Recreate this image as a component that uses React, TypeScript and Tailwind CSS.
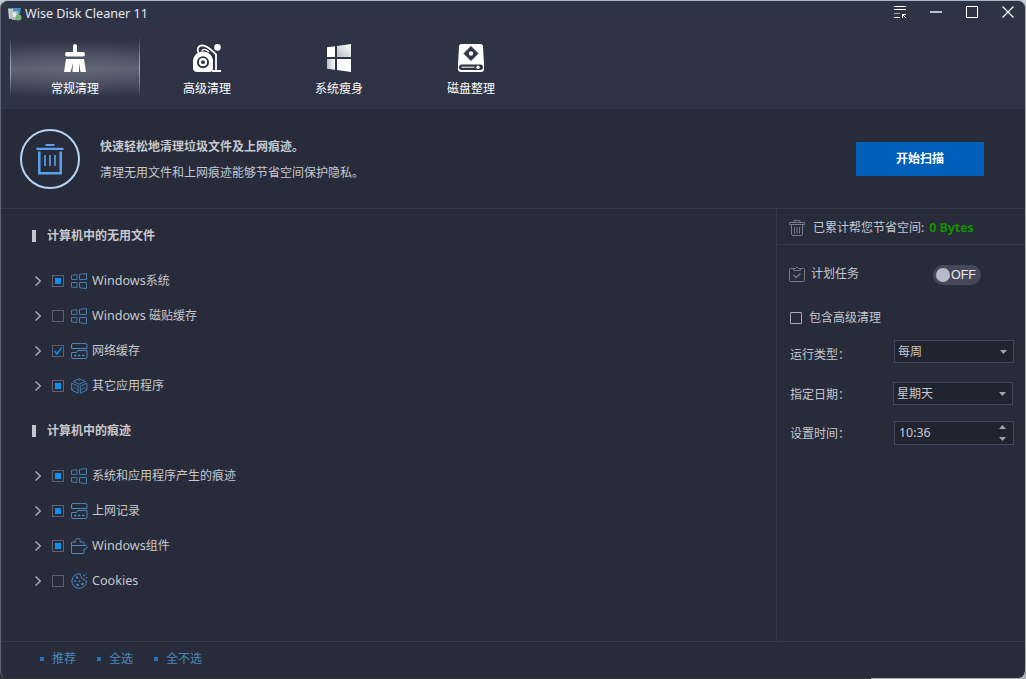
import type { ReactNode } from "react";
import clsx from "clsx";

type CheckState = "partial" | "checked" | "empty";

/* Latin text runs slightly larger than the 12px Chinese text */
function Latin({ children }: { children: ReactNode }) {
  return <span className="text-[12.6px]">{children}</span>;
}

function WindowsOutline() {
  return (
    <svg width="17" height="16" viewBox="0 0 17 16" fill="none" stroke="#437fad">
      <path d="M.5 2.300 6 1.600v4.900H.5zM8.500 1.400l7-.9v6h-7zM.5 9.500H6v5.200l-5.500-.8zM8.500 9.500h7v6.200l-7-1z" />
    </svg>
  );
}

function NetworkIcon() {
  return (
    <svg width="17" height="16" viewBox="0 0 17 16" fill="none" stroke="#4a8abb">
      <path d="M.5 5.500V2Q.5.500 2 .500h12.500Q16 .500 16 2v3.500zM16 7.500V14q0 1.500-1.500 1.500H2Q.5 15.500.5 14V9.500h5l1.500-2z" />
      <path d="M3 12.500h2.500M7 12.500h2.500M11 12.500h2.500" strokeWidth="1.600" />
    </svg>
  );
}

function CubeIcon() {
  return (
    <svg width="17" height="16" viewBox="0 0 17 16" fill="none" stroke="#437fad" strokeLinejoin="round">
      <path d="M8.200.6 14.500 3.500 8.200 6.200 2 3.500zM.6 5.200 7.200 8v7.300L.6 12zM15.900 5.200 9.300 8v7.300l6.600-3.300z" />
      <path d="M.8 12 4 9.500l3 3M15.700 12l-3.200-2.500-3 3M8.200.800v2.400" opacity=".8" />
    </svg>
  );
}

function PuzzleIcon() {
  return (
    <svg width="17" height="16" viewBox="0 0 17 16" fill="none" stroke="#4a8abb">
      <path d="M.5 15V4.500Q.5 4 1 4h3.700C3.600 1.800 5 .500 6.800.500S10 1.800 8.900 4H12.500q.5 0 .5.500v3c1.800-.6 3 .3 3 1.700s-1.200 2.400-3 1.800v4q0 .5-.5.500H1Q.5 15.500.5 15zM1 7.500h12" />
    </svg>
  );
}

function CookieIcon() {
  return (
    <svg width="17" height="16" viewBox="0 0 17 16" fill="none" stroke="#4a8abb">
      <path d="M9.500.9A7.300 7.300 0 1 0 15.500 8c-1.500.2-2.500-.6-2.500-2-2 .2-3-.8-2.700-2.400C9.300 3 9 2 9.500.9z" />
      <g fill="#4a8abb" stroke="none">
        <circle cx="6" cy="4.500" r="1.200" />
        <circle cx="4" cy="8" r="1.100" />
        <circle cx="8.500" cy="8.200" r="1" />
        <circle cx="6.500" cy="11.800" r="1.300" />
        <circle cx="11.500" cy="11" r="1.300" />
        <circle cx="13" cy="2.500" r=".9" />
        <circle cx="15.500" cy="4.500" r=".8" />
        <circle cx="15.300" cy="1.200" r=".6" />
      </g>
    </svg>
  );
}

function BroomIcon() {
  return (
    <svg width="28" height="28" viewBox="0 0 28 28" fill="#fff">
      <path d="M12 2a2 2 0 0 1 4 0v6h6q2 0 2 2.300T22 12.500H6q-2 0-2-2.200T6 8h6z" />
      <path d="M5 15h18l2 13h-5.500L18 19v9h-6.500L12 19l-2.500 9H3z" />
    </svg>
  );
}

function VacuumIcon() {
  return (
    <svg width="30" height="28" viewBox="0 0 30 28" fill="none">
      <path
        fill="#fff"
        fillRule="evenodd"
        d="M11 7.500A10 10 0 0 1 21 18v6q0 4-4 4H5.500Q1 28 1 23.500V18A10 10 0 0 1 11 7.500zM11 12.200a6 6 0 1 0 0 12.100 6 6 0 0 0 0-12.100z"
      />
      <circle cx="11" cy="18.200" r="3" stroke="#fff" strokeWidth="2.200" />
      <path d="M6.500 9C4.500 5.500 6 1.500 10.500 1.300c5 0 9 5 13.500 9.200V26" stroke="#fff" strokeWidth="1.800" />
      <path d="M10 7.500c0-3 4-3 7 .5" stroke="#fff" strokeWidth="1.300" />
      <path d="M20 27h9" stroke="#fff" strokeWidth="2.200" />
      <circle cx="25.500" cy="3.400" r="3.300" fill="#fff" />
    </svg>
  );
}

function WindowsSolid() {
  return (
    <svg width="28" height="28" viewBox="0 0 28 28">
      <defs>
        <linearGradient id="paneTop" x1="0" y1="1" x2="1" y2="0">
          <stop offset="0" stopColor="#b9bdc6" />
          <stop offset="1" stopColor="#fff" />
        </linearGradient>
        <linearGradient id="paneBottom">
          <stop offset="0" stopColor="#b9bdc6" />
          <stop offset="1" stopColor="#fff" />
        </linearGradient>
      </defs>
      <path fill="#fff" d="M2 3.200 10 2.300V13H2zM12 15h14v13l-14-2z" />
      <path fill="url(#paneTop)" d="M12 2 26 0v13H12z" />
      <path fill="url(#paneBottom)" d="M2 15h8v10.700l-8-1z" />
    </svg>
  );
}

function DiskIcon() {
  return (
    <svg width="28" height="28" viewBox="0 0 28 28">
      <path fill="#fff" d="M4.500 0h19Q26 0 26 2.500l1 18V25q0 3-3 3H4q-3 0-3-3v-4.500l1-18Q2 0 4.500 0z" />
      <path fill="#2e3446" d="m14 2.500 7 7-7 7-7-7z" stroke="#2e3446" strokeLinejoin="round" />
      <circle cx="14" cy="9.500" r="2.200" fill="#fff" />
      <rect x="2" y="20.500" width="24" height="5.500" rx="2.700" fill="#2e3446" />
      <path d="M4.500 23.200h13" stroke="#b9bdc6" strokeWidth="1.500" />
      <circle cx="21" cy="23.200" r="1.700" fill="#fff" />
    </svg>
  );
}

const tabs = [
  { label: "常规清理", icon: <BroomIcon />, active: true },
  { label: "高级清理", icon: <VacuumIcon /> },
  { label: "系统瘦身", icon: <WindowsSolid /> },
  { label: "磁盘整理", icon: <DiskIcon /> },
];

const sections: { title: string; items: { label: ReactNode; icon: ReactNode; state: CheckState }[] }[] = [
  {
    title: "计算机中的无用文件",
    items: [
      { label: <><Latin>Windows</Latin>系统</>, icon: <WindowsOutline />, state: "partial" },
      { label: <><Latin>Windows </Latin>磁贴缓存</>, icon: <WindowsOutline />, state: "empty" },
      { label: "网络缓存", icon: <NetworkIcon />, state: "checked" },
      { label: "其它应用程序", icon: <CubeIcon />, state: "partial" },
    ],
  },
  {
    title: "计算机中的痕迹",
    items: [
      { label: "系统和应用程序产生的痕迹", icon: <WindowsOutline />, state: "partial" },
      { label: "上网记录", icon: <NetworkIcon />, state: "partial" },
      { label: <><Latin>Windows</Latin>组件</>, icon: <PuzzleIcon />, state: "partial" },
      { label: <Latin>Cookies</Latin>, icon: <CookieIcon />, state: "empty" },
    ],
  },
];

function Checkbox({ state }: { state: CheckState }) {
  return (
    <span className="flex size-3 items-center justify-center border border-[#5b6174]">
      {state === "partial" && <span className="size-1.5 bg-[#0d8ff2]" />}
      {state === "checked" && (
        <svg width="10" height="10" viewBox="0 0 10 10" fill="none" stroke="#0d8ff2" strokeWidth="1.500">
          <path d="m1.500 5 2.300 3L8.700 1.500" />
        </svg>
      )}
    </span>
  );
}

function TitleBar() {
  return (
    <div className="flex h-[27px] items-center pr-[11px] pb-px pl-[7px]">
      <svg width="14" height="13" viewBox="0 0 14 13">
        <path fill="#3f8fc4" d="M4 0h9l-1 6H5z" />
        <path fill="#c3cbd0" d="M0 .500h5v10L1 11z" />
        <path fill="#a9b7b4" d="M3 3h7l2 9H4z" />
        <path fill="#e5e9e8" d="m4 4 4 .5 1 4-4 1z" />
        <circle cx="10.500" cy="9.500" r="3" fill="#6fb573" />
      </svg>
      <h1 className="ml-[3px] text-[12.6px] text-[#e6e8ec]">Wise Disk Cleaner 11</h1>
      <div className="mb-1 ml-auto flex items-center gap-6">
        <svg width="12" height="12" viewBox="0 0 12 12" fill="none" stroke="#fff">
          <path d="M0 .500h12M0 3.500h12M0 11.500h6" />
          <path d="M0 7.500h6" stroke="#9ca2b2" />
          <path d="M8.500 12V8.500H12M8.500 8.500l3.500 3.500" />
        </svg>
        <svg width="12" height="12" viewBox="0 0 12 12">
          <path d="M0 6h12" stroke="#b9bed0" strokeWidth="2" />
        </svg>
        <svg width="12" height="12" viewBox="0 0 12 12" fill="none" stroke="#fff">
          <path d="M.5.500h11v11H.5z" />
        </svg>
        <svg width="12" height="12" viewBox="0 0 12 12" fill="none" stroke="#fff" strokeWidth="1.200">
          <path d="m.5.500 11 11M11.500.500l-11 11" />
        </svg>
      </div>
    </div>
  );
}

/* Thin vertical glow on both edges of the selected tab */
function EdgeGlow() {
  return <span className="h-[62px] w-px bg-linear-to-b from-transparent via-[#a6abb9] to-transparent" />;
}

function Tabs() {
  return (
    <nav className="flex gap-0.5 pt-2 pl-[9px]">
      {tabs.map((tab) => (
        <button
          key={tab.label}
          className={clsx(
            "flex h-[66px] w-[130px] justify-between text-white",
            tab.active &&
              "bg-[radial-gradient(ellipse_70%_45%_at_50%_50%,#6d718060,transparent),linear-gradient(transparent_8%,#5c6171_50%,transparent_92%)]"
          )}
        >
          {tab.active && <EdgeGlow />}
          <span className="flex flex-1 flex-col items-center pt-2">
            <span className="flex h-7 items-center">{tab.icon}</span>
            <span className="mt-2 leading-[18px]">{tab.label}</span>
          </span>
          {tab.active && <EdgeGlow />}
        </button>
      ))}
    </nav>
  );
}

function Banner() {
  return (
    <div className="flex h-[100px] items-center border-b border-[#363a4a] pr-[41px] pl-[19px]">
      <div className="flex size-[60px] items-center justify-center rounded-full border-2 border-[#b5d5f8]">
        <svg width="28" height="32" viewBox="0 0 28 32" fill="none" stroke="#5ba3ef">
          <path d="M9.500 2h9M.5 5.800h27" strokeWidth="2.200" />
          <path d="M3.300 8.500v21.800h21.400V8.500" strokeWidth="2.500" />
          <path d="M9 12v11M14 12v11M19 12v11" strokeWidth="1.600" />
        </svg>
      </div>
      <div className="ml-5 pt-[3px] leading-[26px]">
        <p className="font-bold">快速轻松地清理垃圾文件及上网痕迹。</p>
        <p>清理无用文件和上网痕迹能够节省空间保护隐私。</p>
      </div>
      <button className="ml-auto h-[34px] w-32 bg-[#005fb8] pt-px font-bold text-white">开始扫描</button>
    </div>
  );
}

function CleanList() {
  return (
    <main className="w-[775px]">
      {sections.map((section) => (
        <section key={section.title}>
          <h2 className="flex h-[55px] items-center pb-[2px] pl-[31px] font-bold">
            <span className="mt-px mr-[11px] h-3 w-1 bg-[#c3c6cc]" />
            {section.title}
          </h2>
          {section.items.map((item, i) => (
            <div key={i} className="flex h-[35px] items-center pb-px pl-[33px]">
              <svg width="8" height="10" viewBox="0 0 8 10" fill="none" stroke="#a4a8b4" strokeWidth="1.500">
                <path d="m1.500 .500 4.800 4.500-4.800 4.500" />
              </svg>
              <span className="mr-[7px] ml-2.5">
                <Checkbox state={item.state} />
              </span>
              {item.icon}
              <span className="ml-1">{item.label}</span>
            </div>
          ))}
        </section>
      ))}
    </main>
  );
}

function SelectBox({ value }: { value: string }) {
  return (
    <div className="flex h-[23px] w-[120px] items-center justify-between border border-[#414662] bg-[#20242f] pr-1.5 pl-[3px]">
      {value}
      <svg width="7" height="4" viewBox="0 0 7 4" fill="#a0a5b1">
        <path d="M0 0h7L3.500 4z" />
      </svg>
    </div>
  );
}

function SchedulePanel() {
  return (
    <aside className="flex-1 border-l border-[#363a4a]">
      <div className="flex h-9 items-center border-b border-[#363a4a] pt-0.5 pl-3">
        <svg width="16" height="16" viewBox="0 0 16 16" fill="none" stroke="#747a88">
          <path d="M5 2.500V.500h6v2M.5 4.500v-2h15v2zM2.500 4.500V14q0 1.500 1.500 1.500h8q1.500 0 1.500-1.500V4.500M5.500 7v6.500M8 7v6.500M10.500 7v6.500" />
        </svg>
        <span className="ml-2">已累计帮您节省空间:</span>
        <b className="ml-[5px] text-[12.4px] text-[#169000]">0 Bytes</b>
      </div>
      <div className="flex h-[60px] items-center pr-[44px] pl-3">
        <svg width="16" height="16" viewBox="0 0 16 16" fill="none" stroke="#747a88" className="mb-0.5">
          <path d="M4.500 2.500h-3q-1 0-1 1v11q0 1 1 1h13q1 0 1-1v-11q0-1-1-1h-3M4.500 4.500v-2h2Q8-.5 9.500 2.500h2v2z" />
          <path d="m4.500 9 2.500 2.500L11.500 7.500" strokeWidth="1.300" />
        </svg>
        <span className="mb-0.5 ml-1.5">计划任务</span>
        <span className="ml-auto flex h-5 w-12 items-center rounded-full bg-[#454959] pl-[3px]">
          <span className="size-3.5 rounded-full bg-[#b7bac8]" />
          <span className="ml-px font-['Liberation_Sans'] text-[12.5px] text-[#e8e9ee]">OFF</span>
        </span>
      </div>
      <div className="flex h-[26px] items-center pb-px pl-[13px]">
        <span className="size-3 rounded-[1px] border border-[#a8acb7]" />
        <span className="mt-px ml-[7px]">包含高级清理</span>
      </div>
      <div className="flex flex-col pt-[9px] pr-[11px] pl-[13px]">
        <div className="flex h-[42px] items-start justify-between">
          <span className="pt-1.5">运行类型：</span>
          <SelectBox value="每周" />
        </div>
        <div className="mr-px flex h-[39px] items-start justify-between">
          <span className="pt-1">指定日期：</span>
          <SelectBox value="星期天" />
        </div>
        <div className="flex items-start justify-between">
          <span className="pt-1">设置时间：</span>
          <div className="flex h-6 w-[120px] items-center justify-between border border-[#414662] bg-[#20242f] pr-[7px] pl-1">
            <span className="text-[12.4px]">10:36</span>
            <svg width="7" height="16" viewBox="0 0 7 16" fill="#a0a5b1">
              <path d="M0 4h7L3.500 0zM0 12h7l-3.500 4z" />
            </svg>
          </div>
        </div>
      </div>
    </aside>
  );
}

export default function App() {
  return (
    <div className="h-[679px] w-[1026px] bg-[linear-gradient(#c3ccd4,#c3ccd4),linear-gradient(90deg,#303236_871px,#b0b1b4_871px)] bg-size-[100%_20px,100%_100%] bg-no-repeat font-['Noto_Sans','Noto_Sans_CJK_SC',sans-serif] text-xs leading-[18px] text-[#c6c8ce]">
      <div className="flex h-full flex-col overflow-hidden rounded-lg border border-t-[#a7b5c5] border-r-[#a7aab2] border-b-transparent border-l-[#5e6572] bg-[#272b3a] bg-clip-padding">
        <header className="h-[108px] shrink-0 bg-[#2e3446]">
          <TitleBar />
          <Tabs />
        </header>
        <Banner />
        <div className="flex flex-1">
          <CleanList />
          <SchedulePanel />
        </div>
        <footer className="flex h-[37px] items-center gap-[21px] border-t border-[#363a4a] pb-0.5 pl-[39px] text-[#4789bf]">
          {["推荐", "全选", "全不选"].map((label) => (
            <span key={label} className="flex items-center">
              <span className="mr-2 mb-px size-1 bg-[#2474bd]" />
              {label}
            </span>
          ))}
        </footer>
      </div>
    </div>
  );
}
